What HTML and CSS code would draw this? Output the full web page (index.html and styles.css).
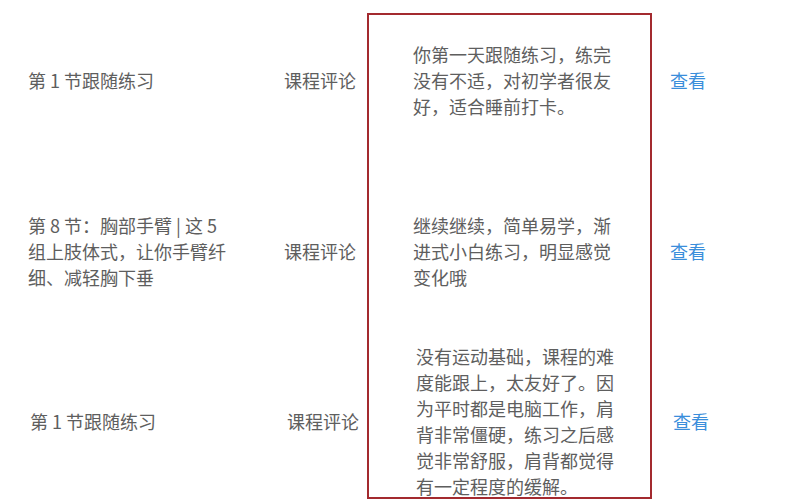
FILE: index.html
```html
<!DOCTYPE html>
<html lang="zh-CN">
<head>
<meta charset="utf-8">
<title>课程评论</title>
<link rel="stylesheet" href="styles.css">
</head>
<body>
<div class="table">
  <div class="highlight"></div>

  <div class="cell title r1">第 1 节跟随练习</div>
  <div class="cell kind r1">课程评论</div>
  <div class="cell comment r1">你第一天跟随练习，练完没有不适，对初学者很友好，适合睡前打卡。</div>
  <div class="cell action r1"><a class="link" href="#">查看</a></div>

  <div class="cell title r2">第 8 节：胸部手臂 | 这 5 组上肢体式，让你手臂纤细、减轻胸下垂</div>
  <div class="cell kind r2">课程评论</div>
  <div class="cell comment r2">继续继续，简单易学，渐进式小白练习，明显感觉变化哦</div>
  <div class="cell action r2"><a class="link" href="#">查看</a></div>

  <div class="cell title r3 shift">第 1 节跟随练习</div>
  <div class="cell kind r3 shift">课程评论</div>
  <div class="cell comment r3 comment-shift">没有运动基础，课程的难度能跟上，太友好了。因为平时都是电脑工作，肩背非常僵硬，练习之后感觉非常舒服，肩背都觉得有一定程度的缓解。</div>
  <div class="cell action r3 shift"><a class="link" href="#">查看</a></div>
</div>
</body>
</html>
```

FILE: styles.css
```css
html, body {
  margin: 0;
  padding: 0;
  background: #ffffff;
  overflow: hidden;
}

body {
  width: 808px;
  height: 500px;
  font-family: "Noto Sans CJK SC", "Noto Sans", sans-serif;
  font-size: 18px;
  line-height: 26px;
  color: #5e5e5e;
}

.table {
  display: grid;
  grid-template-columns: 28px 256px 83px 285px 1fr;
  grid-template-rows: 159px 183px 158px;
}

.highlight {
  grid-column: 4;
  grid-row: 1 / 4;
  margin: 13px 0 1px 0;
  border: 2px solid #a32a2f;
  box-sizing: border-box;
}

.cell {
  align-self: center;
}

.r1 { grid-row: 1; }
.r2 { grid-row: 2; }
.r3 { grid-row: 3; }

.title {
  grid-column: 2;
  width: 200px;
}

.kind {
  grid-column: 3;
}

.comment {
  grid-column: 4;
  padding: 0 41px 0 46px;
}

.comment-shift {
  padding: 0 38px 0 49px;
}

.action {
  grid-column: 5;
  padding-left: 18px;
}

.shift {
  margin-left: 3px;
}

.title.shift {
  margin-left: 2px;
}

.link {
  color: #3a8edb;
  text-decoration: none;
}
```
